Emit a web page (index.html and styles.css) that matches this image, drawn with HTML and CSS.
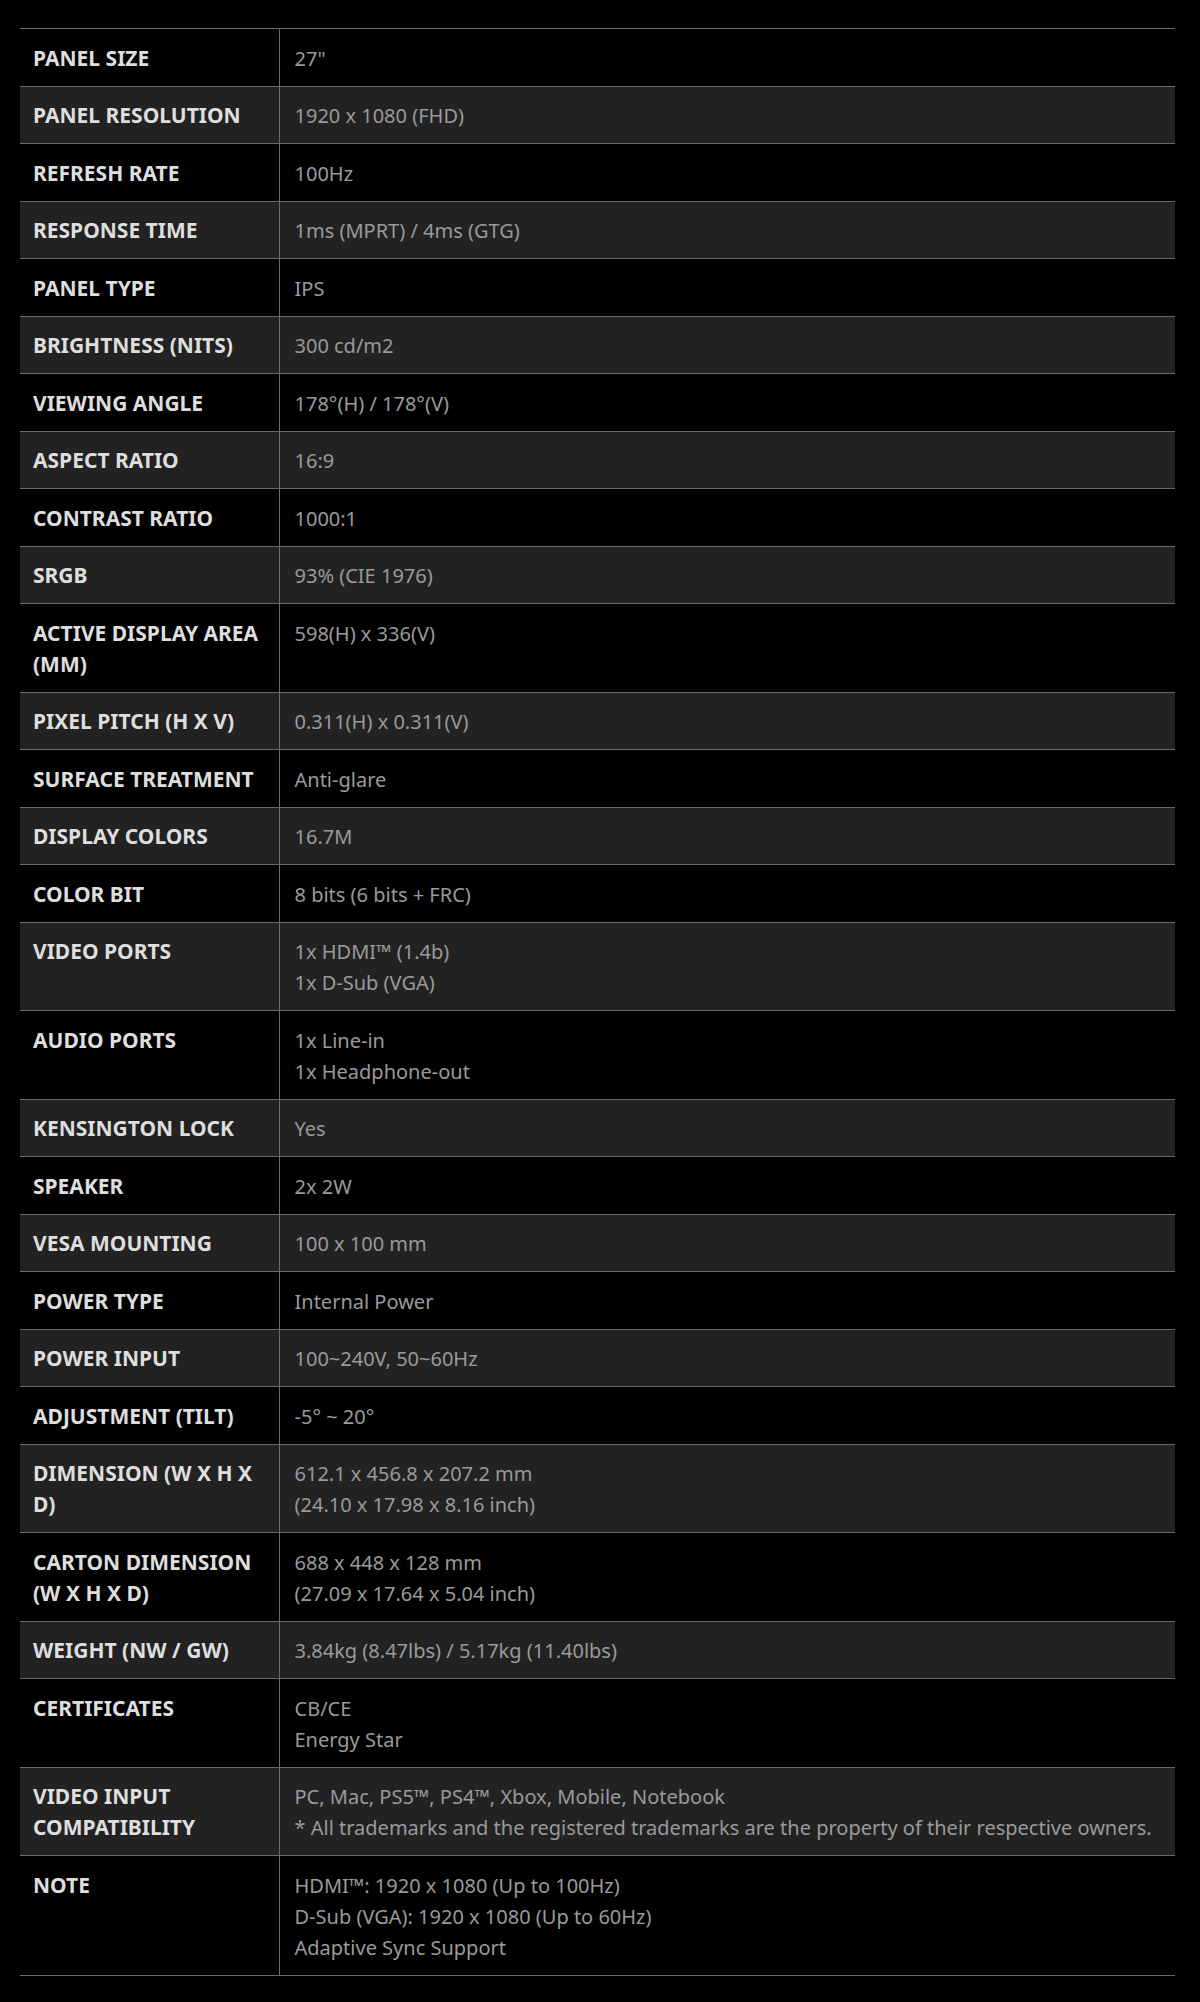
FILE: index.html
```html
<!DOCTYPE html>
<html lang="en">
<head>
    <meta charset="UTF-8">
    <meta name="viewport" content="width=device-width, initial-scale=1.0">
    <title>Specification</title>
    <link rel="stylesheet" href="styles.css">
</head>
<body>
    <div class="spec-container">
        <table class="spec-table">
            <tbody>
                <tr><th>Panel Size</th><td>27"</td></tr>
                <tr><th>Panel Resolution</th><td>1920 x 1080 (FHD)</td></tr>
                <tr><th>Refresh Rate</th><td>100Hz</td></tr>
                <tr><th>Response Time</th><td>1ms (MPRT) / 4ms (GTG)</td></tr>
                <tr><th>Panel Type</th><td>IPS</td></tr>
                <tr><th>Brightness (nits)</th><td>300 cd/m2</td></tr>
                <tr><th>Viewing Angle</th><td>178°(H) / 178°(V)</td></tr>
                <tr><th>Aspect Ratio</th><td>16:9</td></tr>
                <tr><th>Contrast Ratio</th><td>1000:1</td></tr>
                <tr><th>sRGB</th><td>93% (CIE 1976)</td></tr>
                <tr><th>Active Display Area (mm)</th><td>598(H) x 336(V)</td></tr>
                <tr><th>Pixel Pitch (H x V)</th><td>0.311(H) x 0.311(V)</td></tr>
                <tr><th>Surface Treatment</th><td>Anti-glare</td></tr>
                <tr><th>Display Colors</th><td>16.7M</td></tr>
                <tr><th>Color Bit</th><td>8 bits (6 bits + FRC)</td></tr>
                <tr><th>Video Ports</th><td>1x HDMI™ (1.4b)<br>1x D-Sub (VGA)</td></tr>
                <tr><th>Audio Ports</th><td>1x Line-in<br>1x Headphone-out</td></tr>
                <tr><th>Kensington Lock</th><td>Yes</td></tr>
                <tr><th>Speaker</th><td>2x 2W</td></tr>
                <tr><th>VESA Mounting</th><td>100 x 100 mm</td></tr>
                <tr><th>Power Type</th><td>Internal Power</td></tr>
                <tr><th>Power Input</th><td>100~240V, 50~60Hz</td></tr>
                <tr><th>Adjustment (Tilt)</th><td>-5° ~ 20°</td></tr>
                <tr><th>Dimension (W x H x D)</th><td>612.1 x 456.8 x 207.2 mm<br>(24.10 x 17.98 x 8.16 inch)</td></tr>
                <tr><th>Carton Dimension (W x H x D)</th><td>688 x 448 x 128 mm<br>(27.09 x 17.64 x 5.04 inch)</td></tr>
                <tr><th>Weight (NW / GW)</th><td>3.84kg (8.47lbs) / 5.17kg (11.40lbs)</td></tr>
                <tr><th>Certificates</th><td>CB/CE<br>Energy Star</td></tr>
                <tr><th>Video Input Compatibility</th><td>PC, Mac, PS5™, PS4™, Xbox, Mobile, Notebook<br>* All trademarks and the registered trademarks are the property of their respective owners.</td></tr>
                <tr><th>Note</th><td>HDMI™: 1920 x 1080 (Up to 100Hz)<br>D-Sub (VGA): 1920 x 1080 (Up to 60Hz)<br>Adaptive Sync Support</td></tr>
            </tbody>
        </table>
    </div>
</body>
</html>
```

FILE: styles.css
```css
* {
    box-sizing: border-box;
    margin: 0;
    padding: 0;
}

body {
    background-color: #000000;
    font-family: 'Noto Sans', 'Open Sans', sans-serif;
}

.spec-container {
    padding: 28px 25px 28px 20px;
}

.spec-table {
    width: 1155px;
    border-collapse: collapse;
    border-bottom: 1px solid #6b6b6b;
}

.spec-table tr {
    border-top: 1px solid #6b6b6b;
}

.spec-table tr:nth-child(even) {
    background-color: #222222;
}

.spec-table th,
.spec-table td {
    vertical-align: top;
    line-height: 31px;
    padding: 13.5px 6px 12px 15px;
    text-align: left;
}

.spec-table th {
    width: 259px;
    padding-left: 13px;
    padding-right: 8px;
    border-right: 1px solid #6b6b6b;
    font-size: 21px;
    font-weight: 700;
    text-transform: uppercase;
    color: #dedede;
}

.spec-table td {
    font-size: 20px;
    font-weight: 400;
    color: #9a9a9a;
}
```
